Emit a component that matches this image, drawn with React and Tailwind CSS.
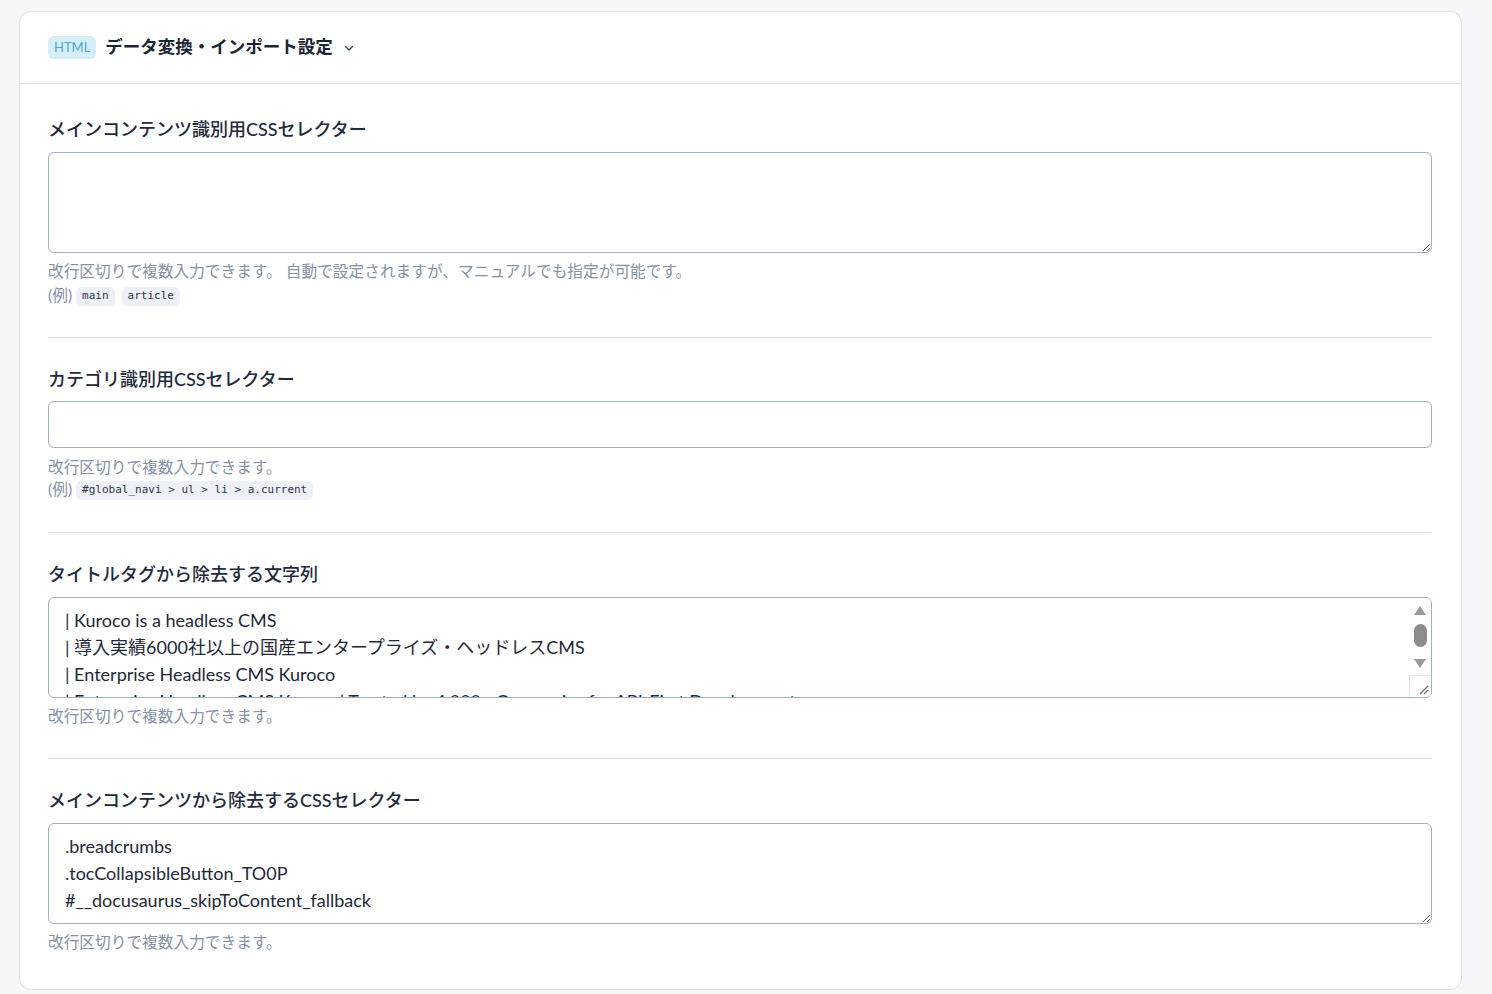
import React from 'react';

const font = "font-['Lato','Noto_Sans_CJK_JP',sans-serif]";
const mono = "font-['DejaVu_Sans_Mono','Liberation_Mono',monospace]";

const Code = ({ children }) => (
  <code className={`${mono} inline-flex items-center h-[19px] px-[6px] rounded-[5px] bg-[#edf1f7] text-[11px] text-[#2d3748]`}>
    {children}
  </code>
);

const Help = ({ children }) => (
  <p className="text-[15.7px] leading-[20px] text-[#8492a6]">{children}</p>
);

const Label = ({ children }) => (
  <label className="block text-[18px] leading-[24px] font-medium text-[#1f2a3c]">{children}</label>
);

const fieldCls =
  "block w-full rounded-[6px] border border-[#9fb0c9] bg-white px-4 py-[9px] text-[18px] leading-[27px] text-[#1f2937] outline-none";

const titleLines = [
  '| Kuroco is a headless CMS',
  '| 導入実績6000社以上の国産エンタープライズ・ヘッドレスCMS',
  '| Enterprise Headless CMS Kuroco',
  '| Enterprise Headless CMS Kuroco | Trusted by 4,000+ Companies for API-First Development',
].join('\n');

const removeLines = [
  '.breadcrumbs',
  '.tocCollapsibleButton_TO0P',
  '#__docusaurus_skipToContent_fallback',
].join('\n');

const ResizeGrip = () => (
  <svg width="11" height="11" viewBox="0 0 11 11" fill="none">
    <path d="M10 2 2 10M10 6 6 10" stroke="#6b6b6b" strokeWidth="1.2" />
  </svg>
);

// fake classic scrollbar drawn over the textarea
const ScrollBar = () => (
  <div className="absolute right-[1px] top-[1px] bottom-[1px] w-[22px] flex flex-col items-center bg-white rounded-r-[5px]">
    <svg className="mt-[7px]" width="14" height="11" viewBox="0 0 14 11">
      <path d="M7 1 13 10H1Z" fill="#9a9a9a" />
    </svg>
    <div className="mt-[8px] w-[13px] h-[23px] rounded-full bg-[#8c8c8c]" />
    <svg className="mt-[11px]" width="14" height="11" viewBox="0 0 14 11">
      <path d="M1 1h12L7 10Z" fill="#9a9a9a" />
    </svg>
    <div className="mt-auto w-full h-[22px] border-l border-t border-[#e3e3e3] flex items-end justify-end pr-[2px] pb-[2px]">
      <ResizeGrip />
    </div>
  </div>
);

export default function App() {
  return (
    <div className={`${font} min-h-screen bg-[#f5f6fa] pl-[19px] pr-[30px] pt-[11px] pb-1`}>
      <div className="rounded-[12px] border border-[#dde2ea] bg-white">
        <div className="flex items-center h-[72px] px-[28px] border-b border-[#dde2ea]">
          <span className="inline-flex items-center h-[23px] px-[6px] rounded-[6px] bg-[#d6eef7] text-[13px] text-[#4ba8cf]">
            HTML
          </span>
          <h2 className="ml-[9px] text-[17.5px] font-bold text-[#1a2433]">データ変換・インポート設定</h2>
          <svg className="ml-[11px] mt-[1px]" width="10" height="10" viewBox="0 0 10 10" fill="none">
            <path d="M1.5 3.5 5 7l3.5-3.5" stroke="#334155" strokeWidth="1.4" strokeLinecap="round" strokeLinejoin="round" />
          </svg>
        </div>

        <div className="pl-[28px] pr-[29px]">
          <section className="pt-[33px] pb-[31px] border-b border-[#dde2ea]">
            <Label>メインコンテンツ識別用CSSセレクター</Label>
            <textarea rows={3} className={`${fieldCls} mt-[11px] resize-y`} defaultValue="" />
            <div className="mt-[8px]">
              <Help>改行区切りで複数入力できます。 自動で設定されますが、マニュアルでも指定が可能です。</Help>
              <div className="mt-[5px] h-[20px] flex items-center gap-[7px] text-[15.7px] text-[#8492a6]">
                <span>(例)</span>
                <span className="-ml-[3px] flex"><Code>main</Code></span>
                <Code>article</Code>
              </div>
            </div>
          </section>

          <section className="pt-[29px] pb-[32px] border-b border-[#dde2ea]">
            <Label>カテゴリ識別用CSSセレクター</Label>
            <input type="text" className={`${fieldCls} mt-[10px]`} defaultValue="" />
            <div className="mt-[9px]">
              <Help>改行区切りで複数入力できます。</Help>
              <div className="mt-[3px] h-[20px] flex items-center gap-[4px] text-[15.7px] text-[#8492a6]">
                <span>(例)</span>
                <Code>#global_navi &gt; ul &gt; li &gt; a.current</Code>
              </div>
            </div>
          </section>

          <section className="pt-[29px] pb-[32px] border-b border-[#dde2ea]">
            <Label>タイトルタグから除去する文字列</Label>
            <div className="relative mt-[11px]">
              <textarea
                rows={3}
                wrap="off"
                className={`${fieldCls} resize-none whitespace-pre overflow-hidden pr-[30px]`}
                defaultValue={titleLines}
              />
              <ScrollBar />
            </div>
            <div className="mt-[8px]">
              <Help>改行区切りで複数入力できます。</Help>
            </div>
          </section>

          <section className="pt-[29px] pb-[37px]">
            <Label>メインコンテンツから除去するCSSセレクター</Label>
            <textarea rows={3} className={`${fieldCls} mt-[11px] resize-y`} defaultValue={removeLines} />
            <div className="mt-[8px]">
              <Help>改行区切りで複数入力できます。</Help>
            </div>
          </section>
        </div>
      </div>
    </div>
  );
}
